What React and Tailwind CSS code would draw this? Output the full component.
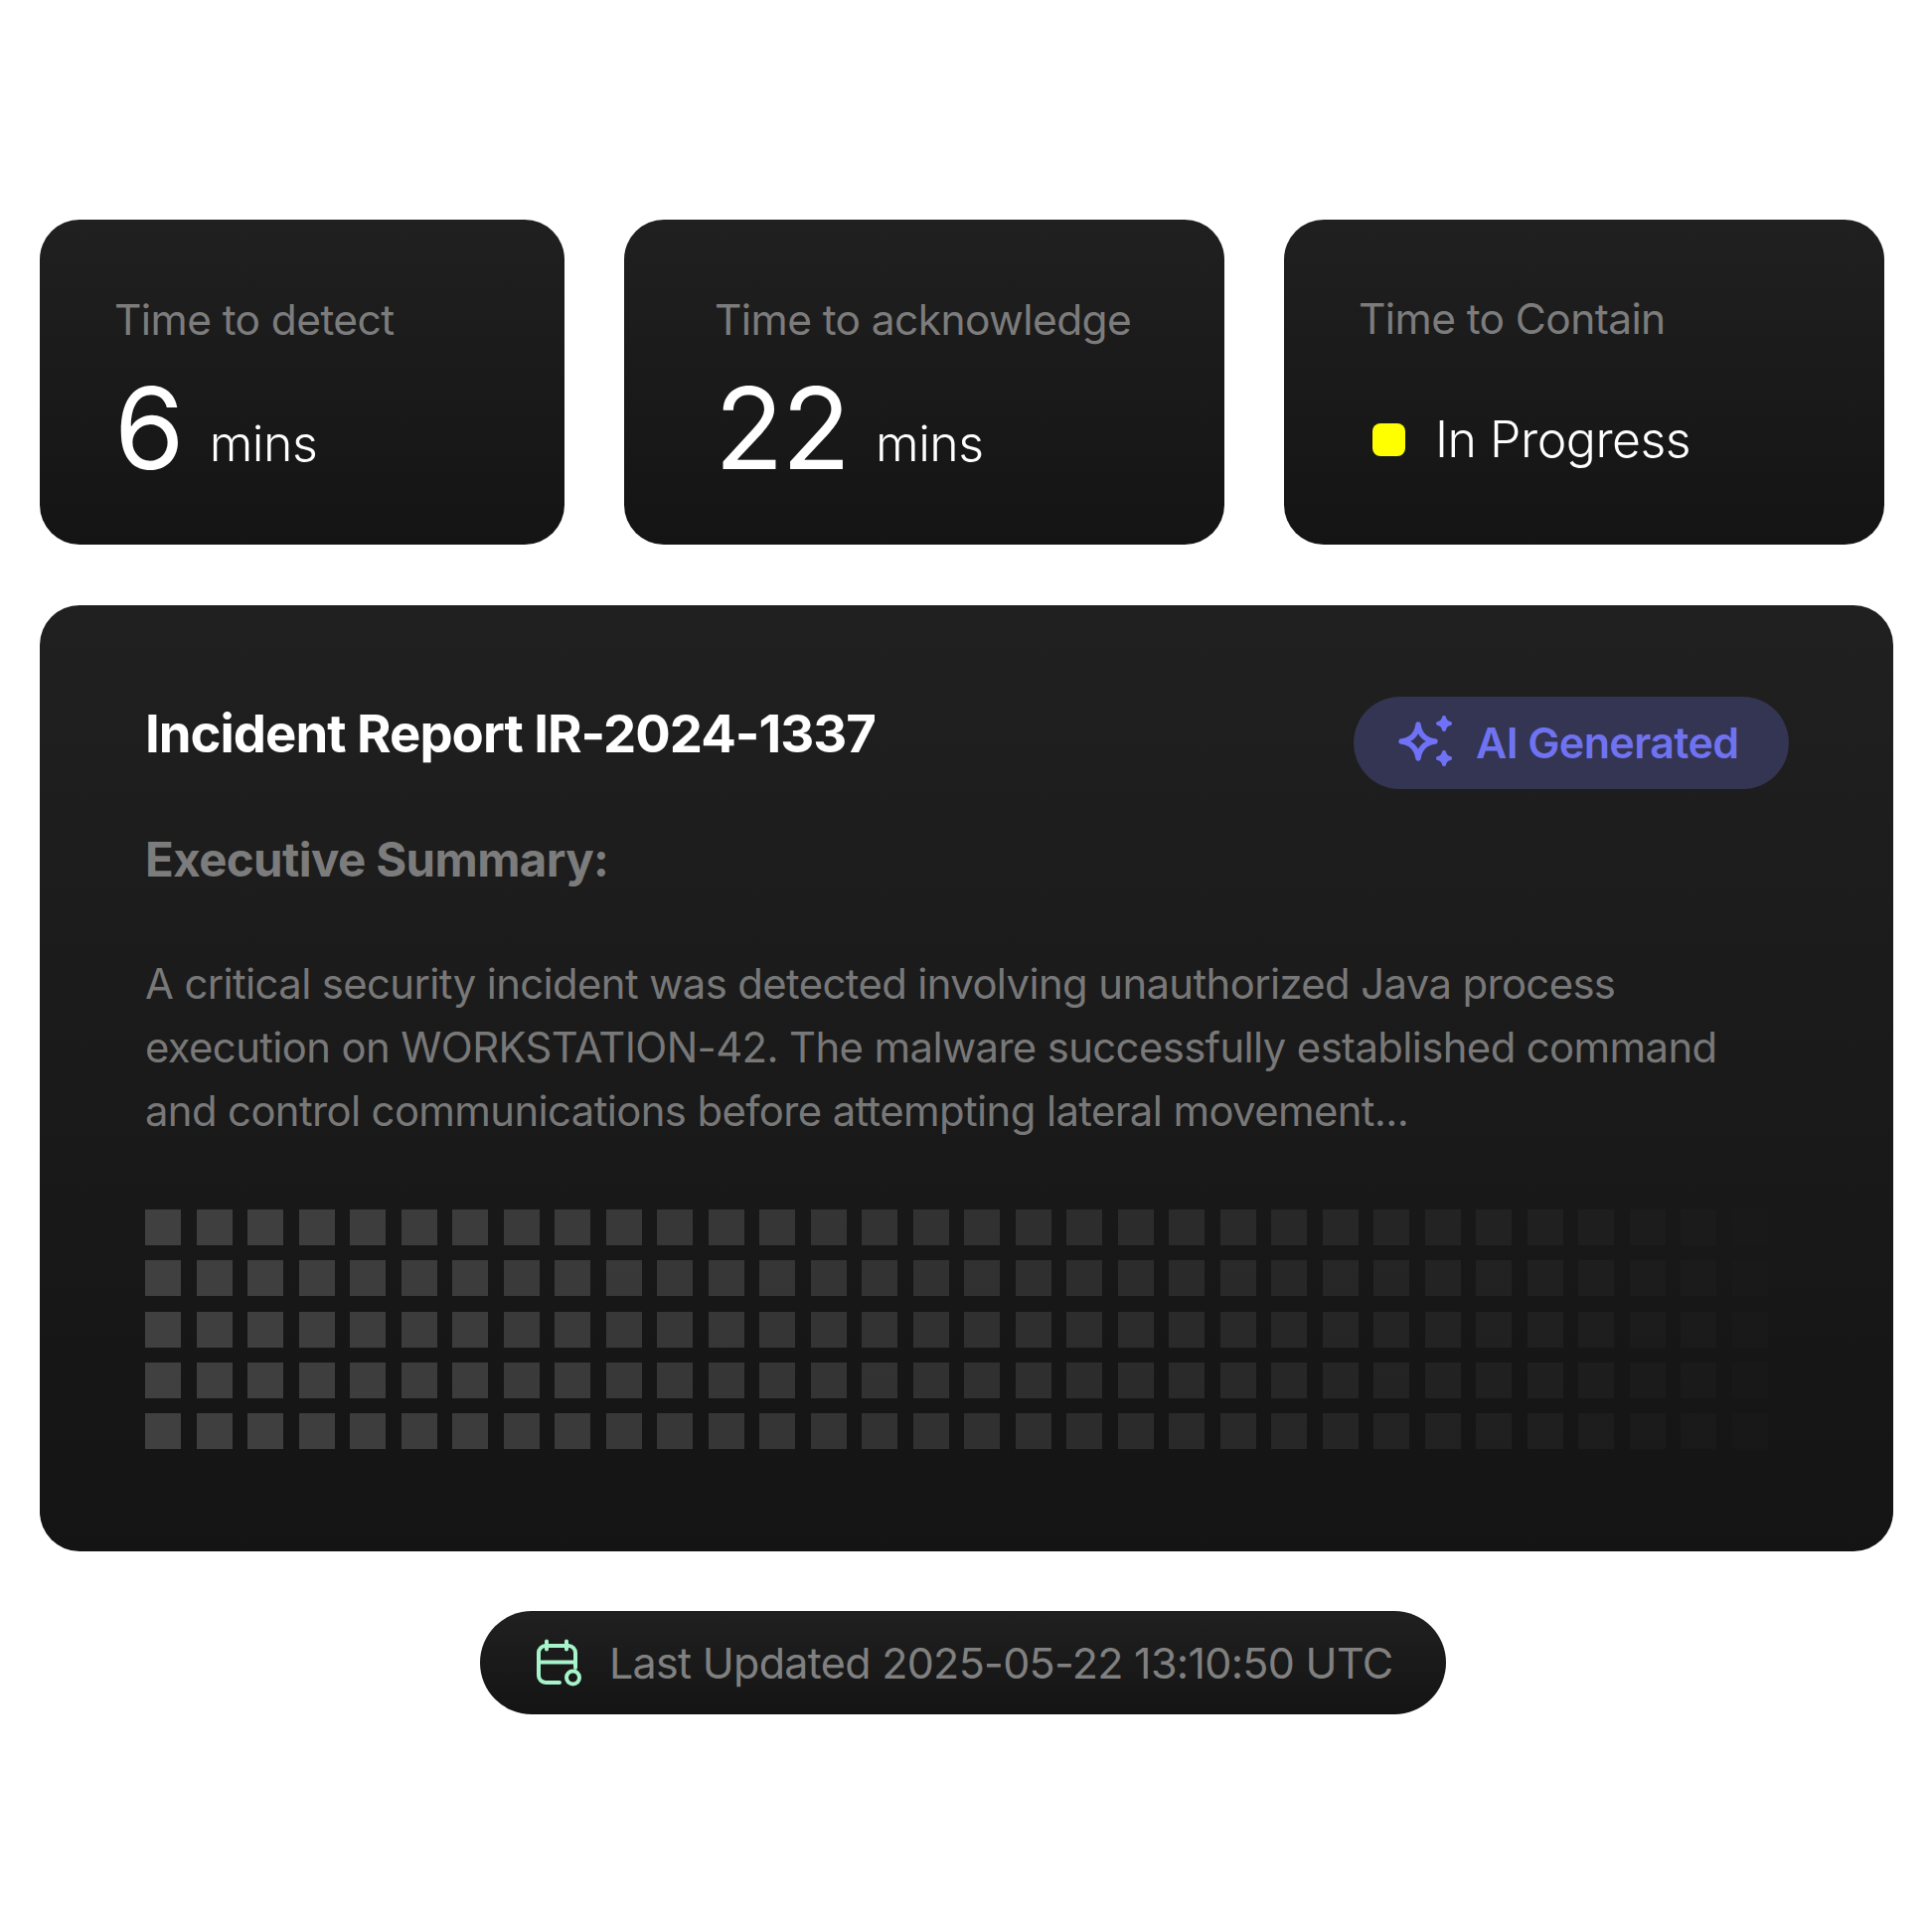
const font = "font-['Inter','Liberation_Sans',sans-serif]";
const cardBg = 'bg-gradient-to-b from-[#202020] to-[#141414]';
const squareOpacity = [...Array(32).keys()].map((i) => 1 - Math.pow(i / 32, 1.4));

function Metric({ label, value, className }) {
  return (
    <div className={`${cardBg} ${className} h-[327px] rounded-[40px] flex flex-col`}>
      <div className="pt-[76px] text-[42.5px] leading-[50px] tracking-[-0.6px] text-[#7c7c7c]">{label}</div>
      <div className="mt-[28px] flex items-end">
        <span className="text-[114px] leading-[112px] tracking-[-2px] text-white">{value}</span>
        <span className="ml-[27px] mb-[13px] text-[50px] leading-[56px] tracking-[-0.5px] font-light text-white">mins</span>
      </div>
    </div>
  );
}

function SparkIcon() {
  return (
    <svg width="58" height="58" viewBox="0 0 58 58" fill="none" stroke="#6f72f5" strokeLinejoin="round">
      <path d="M20 10Q22 25 37 27 22 29 20 44 18 29 3 27 18 25 20 10Z" strokeWidth="5.5" />
      <path d="M46 3Q47 8 52 9 47 10 46 15 45 10 40 9 45 8 46 3Z" fill="#6f72f5" strokeWidth="4" />
      <path d="M46 38Q47 43 52 44 47 45 46 50 45 45 40 44 45 43 46 38Z" fill="#6f72f5" strokeWidth="4" />
    </svg>
  );
}

function CalendarIcon() {
  return (
    <svg width="48" height="48" viewBox="0 0 48 48" fill="none" stroke="#a6f4c9" strokeWidth="4" strokeLinecap="round">
      <path d="M40 29V14a7 7 0 0 0-7-7H10a7 7 0 0 0-7 7v23a7 7 0 0 0 7 7h14" />
      <path d="M3 23.5h37M11 2.5v8M31 2.5v8" />
      <circle cx="37.5" cy="39" r="6.5" />
    </svg>
  );
}

export default function App() {
  return (
    <div className={`${font} w-[1944px] h-[1944px] bg-white pt-[221px] pl-[40px]`}>
      <div className="flex">
        <Metric label="Time to detect" value="6" className="w-[528px] pl-[75px]" />
        <Metric label="Time to acknowledge" value="22" className="ml-[60px] w-[604px] pl-[91px]" />
        <div className={`${cardBg} ml-[60px] w-[604px] h-[327px] rounded-[40px] pl-[75px]`}>
          <div className="pt-[75px] text-[42.5px] leading-[50px] tracking-[-0.6px] text-[#7c7c7c]">Time to Contain</div>
          <div className="mt-[66px] ml-[14px] flex items-center">
            <span className="w-[33px] h-[33px] rounded-[8px] bg-[#ffff00]" />
            <span className="ml-[30px] text-[50px] leading-[60px] tracking-[-0.5px] font-light text-white">In Progress</span>
          </div>
        </div>
      </div>

      <div className={`${cardBg} mt-[61px] w-[1865px] h-[952px] rounded-[40px] pl-[106px] pr-[105px] pt-[92px]`}>
        <div className="flex justify-between items-start">
          <h1 className="mt-[7px] text-[52.7px] leading-[60px] tracking-[-1px] font-bold text-white">Incident Report IR-2024-1337</h1>
          <div className="w-[438px] h-[93px] rounded-full bg-[#343453] flex items-center pl-[45px]">
            <SparkIcon />
            <span className="ml-[20px] text-[43px] tracking-[-0.6px] font-semibold text-[#7073f0]">AI Generated</span>
          </div>
        </div>
        <h2 className="mt-[43px] text-[47.4px] leading-[56px] tracking-[-0.6px] font-bold text-[#7c7c7c]">Executive Summary:</h2>
        <p className="mt-[65px] w-[1620px] text-[41.8px] leading-[64px] tracking-[-0.6px] text-[#787878]">
          A critical security incident was detected involving unauthorized Java process execution on WORKSTATION-42. The malware successfully established command and control communications before attempting lateral movement...
        </p>
        <div className="mt-[67px] grid grid-cols-[repeat(32,36px)] gap-x-[15.5px] gap-y-[15.3px]">
          {[...Array(5)].flatMap((_, r) =>
            squareOpacity.map((o, c) => (
              <div key={`${r}-${c}`} className="w-[36px] h-[36px] bg-[#404040]" style={{ opacity: o }} />
            ))
          )}
        </div>
      </div>

      <div className={`${cardBg} mt-[60px] ml-[443px] w-[972px] h-[104px] rounded-full flex items-center pl-[56px]`}>
        <CalendarIcon />
        <span className="ml-[26px] text-[43px] tracking-[-0.7px] text-[#808080]">Last Updated 2025-05-22 13:10:50 UTC</span>
      </div>
    </div>
  );
}
